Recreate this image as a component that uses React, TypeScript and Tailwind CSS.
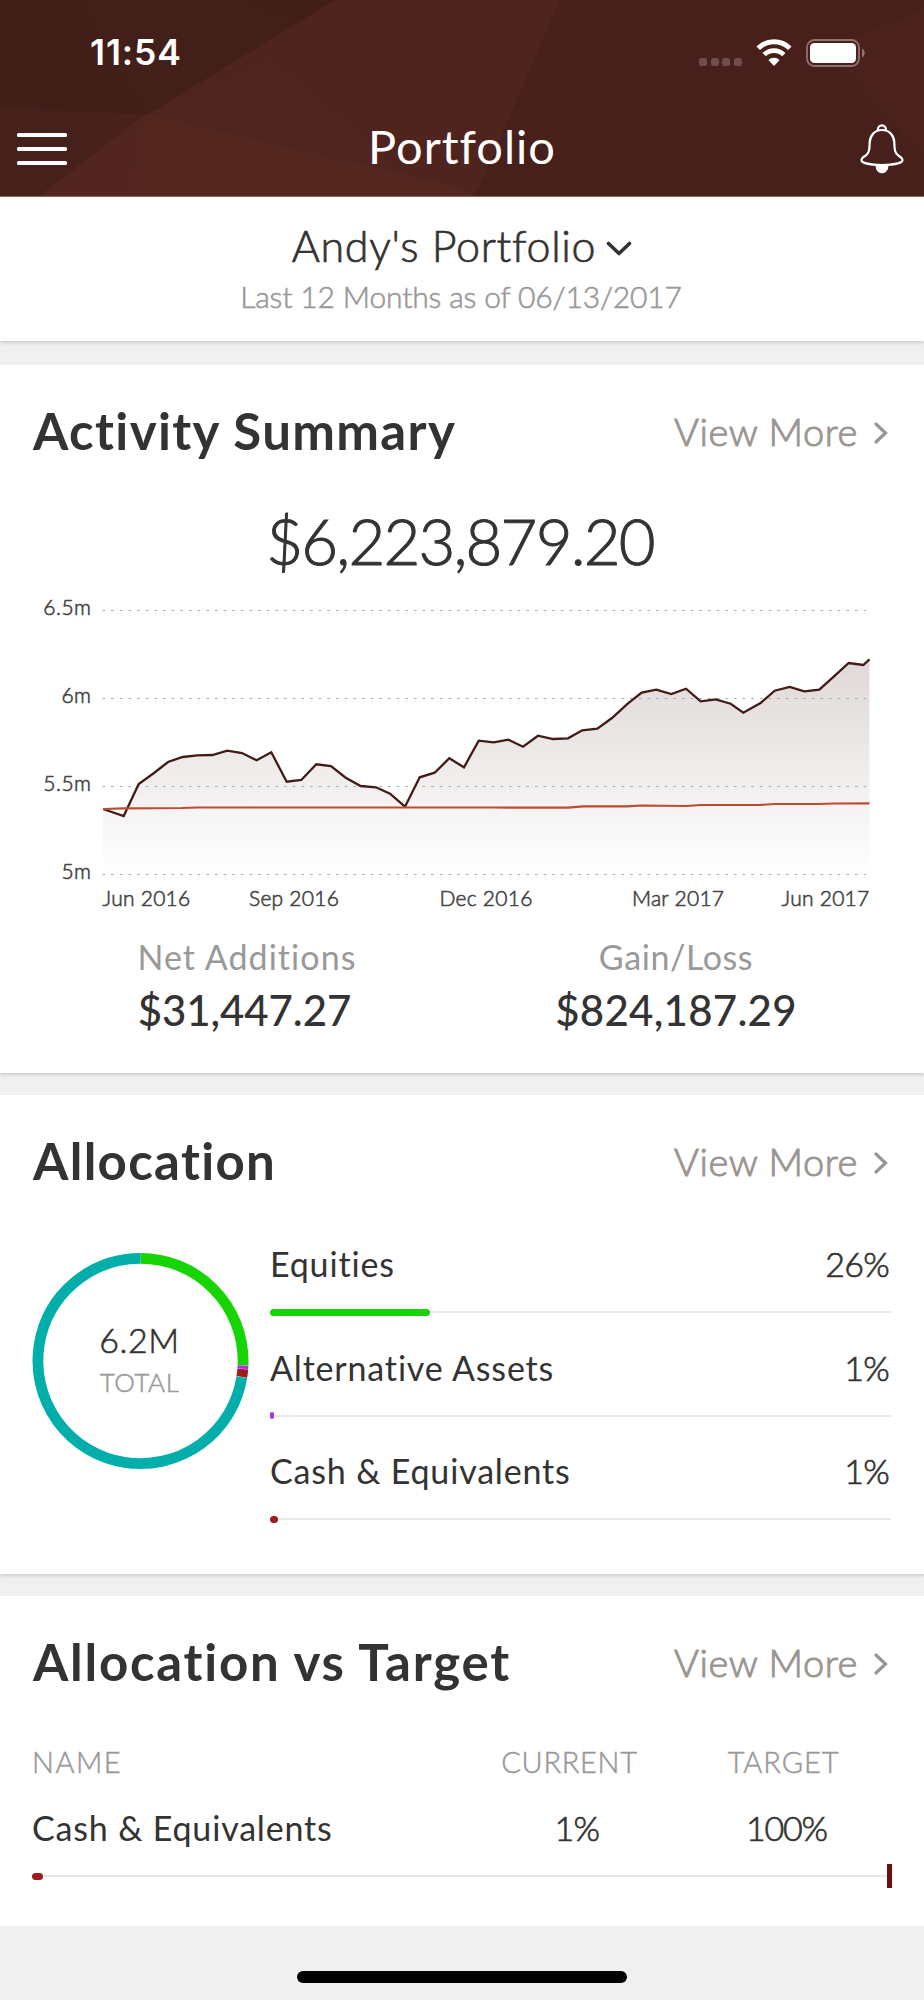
import type { ReactNode } from 'react'

const history: [number, number][] = [
    [103, 219], [123.7, 226], [138.7, 194], [154, 183], [168, 172], [182.7, 167],
    [197.3, 165.3], [212.3, 165], [227.3, 160.7], [242, 163], [256.7, 170.3],
    [271.3, 162.3], [286.7, 191.7], [301.3, 190], [316.3, 174.3], [331, 176],
    [345.7, 187.7], [360.7, 196], [376, 197.3], [390, 203.7], [405, 216.7],
    [419.7, 187.3], [434.7, 182.7], [449.3, 168.3], [464, 177.3], [478.7, 150.7],
    [493.7, 152.3], [508.3, 149.7], [523, 156.7], [538, 145.7], [553, 149],
    [568, 148.3], [582.3, 140.3], [597.3, 138.7], [612, 128], [627.7, 113.7],
    [641.7, 102.5], [656.3, 99.7], [671.3, 104], [686, 98.7], [700.7, 111.3],
    [715.7, 109.3], [730.7, 113.7], [743.3, 122.7], [761, 112.7], [774.7, 100.7],
    [789.7, 97], [804.3, 101.3], [819.3, 99.7], [834, 86.3], [848.7, 73],
    [863.3, 75], [869.5, 69.3],
]

const netInvested: [number, number][] = [
    [103, 219], [124, 218.3], [182, 218], [197, 217.5], [493, 217.5], [568, 217.7],
    [583, 216.3], [627, 216.3], [641, 215.5], [686, 216], [701, 215], [761, 214.8],
    [775, 214], [819, 214], [834, 213.5], [869.5, 213.3],
]

const yAxis = [
    { label: '6.5m', y: 20.5 },
    { label: '6m', y: 108.5 },
    { label: '5.5m', y: 196.5 },
    { label: '5m', y: 284.5 },
]

const xAxis = [
    { label: 'Jun 2016', x: 102.5 },
    { label: 'Sep 2016', x: 249 },
    { label: 'Dec 2016', x: 439.5 },
    { label: 'Mar 2017', x: 632 },
    { label: 'Jun 2017', x: 781.5 },
]

const allocations = [
    { name: 'Equities', percent: '26%', width: 160, color: '#17d505' },
    { name: 'Alternative Assets', percent: '1%', width: 4, color: '#b52fe8' },
    { name: 'Cash & Equivalents', percent: '1%', width: 8, color: '#a01c1c' },
]

// start and length in degrees, clockwise from the top
const slices = [
    { start: 0, length: 92.5, color: '#17d505' },
    { start: 92.5, length: 2, color: '#b52fe8' },
    { start: 94.5, length: 4.5, color: '#a01c1c' },
    { start: 99, length: 261, color: '#02aeaa' },
]

const toPoints = (points: [number, number][]) =>
    points.map((point) => point.join(',')).join(' ')

function HeaderFacets() {
    return (
        <svg
            className="absolute inset-0"
            width="924"
            height="197"
            viewBox="0 0 924 197"
        >
            <rect width="924" height="197" fill="#48201b" />
            <polygon points="560,0 924,0 924,12 855,38 690,36" fill="#47201a" />
            <polygon points="924,8 924,160 845,70 855,36" fill="#4a211c" />
            <polygon points="462,197 480,185 600,140 670,115 740,197" fill="#47201b" />
            <polygon points="0,0 335,0 148,114 0,108" fill="#421e19" />
            <polygon points="80,0 245,0 300,21 148,114 105,50" fill="#431f19" />
            <polygon points="0,108 148,114 38,197 0,197" fill="#46201a" />
            <polygon points="60,112 148,114 95,155" fill="#48211b" />
            <polygon points="335,0 560,0 478,190 462,197 38,197 148,114" fill="#50241e" />
            <polygon points="148,114 270,58 370,140 400,175" fill="#51251f" />
            <polygon points="148,114 462,188 478,197 38,197" fill="#542620" />
            <polygon points="146,114 126,197 38,197" fill="#522520" />
        </svg>
    )
}

function StatusIcons() {
    return (
        <div className="flex items-center">
            <div className="mt-[19px] flex gap-[3.6px]">
                {[0, 1, 2, 3].map((dot) => (
                    <div
                        key={dot}
                        className="size-2 rounded-[2.5px] bg-[#704e4a]"
                    />
                ))}
            </div>
            <svg
                className="ml-[14px]"
                width="36"
                height="27"
                viewBox="0 0 36 27"
                fill="none"
            >
                <path d="M2.2 9.3a22.6 22.6 0 0 1 31.6 0" stroke="#fff" strokeWidth="5" />
                <path d="M8.2 15.6a14 14 0 0 1 19.6 0" stroke="#fff" strokeWidth="4.8" />
                <path d="M18 27l-5.6-5.9a8 8 0 0 1 11.2 0z" fill="#fff" />
            </svg>
            <svg
                className="ml-[14px]"
                width="60"
                height="28"
                viewBox="0 0 60 28"
                fill="none"
            >
                <rect
                    x="1"
                    y="1"
                    width="52"
                    height="26"
                    rx="7.5"
                    stroke="#8e736f"
                    strokeWidth="1.8"
                />
                <rect x="4" y="4" width="46" height="20" rx="4.5" fill="#fff" />
                <path d="M56 9.5v9c3.600-1.6 3.600-7.4 0-9z" fill="#8e736f" />
            </svg>
        </div>
    )
}

function BellIcon() {
    return (
        <svg width="44" height="50" viewBox="0 0 44 50" fill="none">
            <path
                d="M17.8 6C17.6-.3 26.2-.3 26 6"
                stroke="#fff"
                strokeWidth="2.2"
            />
            <path
                d="M22 6C14.6 6 10 11.5 9.7 18.5 9.4 26 9.2 29.2 5.4 31.8 3 33.3 1.5 34.3 1.5 36c0 3 9 5 20.5 5s20.5-2 20.5-5c0-1.7-1.5-2.7-3.9-4.2-3.8-2.6-4-5.8-4.3-13.3C34 11.5 29.4 6 22 6z"
                stroke="#fff"
                strokeWidth="2.2"
            />
            <path d="M15.6 41.5h12.8c0 10.4-12.8 10.4-12.8 0z" fill="#fff" />
        </svg>
    )
}

function Header() {
    return (
        <header className="relative h-[197px] overflow-hidden border-b border-[#8b6a66]">
            <HeaderFacets />
            <div className="relative flex h-[105px] items-center justify-between pr-[58px] pl-[90px] text-white">
                <span className="pt-px font-[Inter] text-[35.5px] font-semibold tracking-[0.9px]">
                    11:54
                </span>
                <StatusIcons />
            </div>
            <div className="relative grid h-[88px] grid-cols-[1fr_auto_1fr] items-center pr-5 pl-[17px] text-white">
                <div className="flex flex-col gap-[10.4px]">
                    <div className="h-1 w-[50px] rounded-[1.5px] bg-white" />
                    <div className="h-1 w-[50px] rounded-[1.5px] bg-white" />
                    <div className="h-1 w-[50px] rounded-[1.5px] bg-white" />
                </div>
                <h1 className="pb-[6px] pl-[3px] text-[47px] leading-[60px] tracking-[1px]">
                    Portfolio
                </h1>
                <div className="flex justify-end">
                    <BellIcon />
                </div>
            </div>
        </header>
    )
}

function CardHeader({ title, spacing }: { title: string; spacing: string }) {
    return (
        <div className="flex h-[95px] items-center justify-between pt-[36px] pr-[36px] pl-[33px]">
            <h2 className={`text-[51px] leading-[60px] font-bold ${spacing}`}>
                {title}
            </h2>
            <div className="flex items-center text-[38px] leading-[60px] font-light tracking-[0.55px] text-[#9b9592] [-webkit-text-stroke:1px]">
                View More
                <svg
                    className="mt-[4px] ml-[16px]"
                    width="14"
                    height="22"
                    viewBox="0 0 14 22"
                    fill="none"
                >
                    <path
                        d="M2 2l9.5 9L2 20"
                        stroke="currentColor"
                        strokeWidth="3.2"
                        strokeLinecap="round"
                    />
                </svg>
            </div>
        </div>
    )
}

function Card({ className, children }: { className: string; children: ReactNode }) {
    return (
        <section
            className={`bg-white shadow-[0_2px_3px_rgba(0,0,0,0.14)] ${className}`}
        >
            {children}
        </section>
    )
}

function ActivityChart() {
    return (
        <svg
            className="mt-[9px] block"
            width="924"
            height="325"
            viewBox="0 0 924 325"
            fill="none"
        >
            <defs>
                <linearGradient
                    id="area"
                    gradientUnits="userSpaceOnUse"
                    x1="0"
                    y1="69"
                    x2="0"
                    y2="284"
                >
                    <stop offset="0" stopColor="#421a16" stopOpacity="0.17" />
                    <stop offset="1" stopColor="#421a16" stopOpacity="0" />
                </linearGradient>
            </defs>
            <polygon
                points={`103,284 ${toPoints(history)} 869.5,284`}
                fill="url(#area)"
            />
            {yAxis.map(({ label, y }) => (
                <g key={label}>
                    <line
                        x1="102.5"
                        x2="866"
                        y1={y}
                        y2={y}
                        stroke="#a9a9a9"
                        strokeDasharray="2.6 6.05"
                    />
                    <text
                        x="91.5"
                        y={y + 4.5}
                        textAnchor="end"
                        className="fill-[#444] stroke-[#444] stroke-[0.6] text-[21px] font-light tracking-[0.5px]"
                    >
                        {label}
                    </text>
                </g>
            ))}
            <polyline points={toPoints(history)} stroke="#421a16" strokeWidth="2.3" />
            <polyline points={toPoints(netInvested)} stroke="#bd4b2e" strokeWidth="2.2" />
            {xAxis.map(({ label, x }) => (
                <text
                    key={label}
                    x={x}
                    y="316"
                    className="fill-[#444] stroke-[#444] stroke-[0.6] text-[21px] font-light tracking-[0.25px]"
                >
                    {label}
                </text>
            ))}
        </svg>
    )
}

function ActivitySummary() {
    return (
        <Card className="mt-6 h-[708px]">
            <CardHeader title="Activity Summary" spacing="tracking-[1.35px]" />
            <p className="mt-[41px] pr-1 text-center text-[63.5px] leading-[80px] font-light tracking-[-1.8px] [-webkit-text-stroke:1px]">
                $6,223,879.20
            </p>
            <ActivityChart />
            <div className="mt-[20px] grid grid-cols-2 px-8 text-center">
                <div>
                    <p className="text-[34px] leading-[44px] tracking-[1.06px] text-[#999]">
                        Net Additions
                    </p>
                    <p className="mt-1 pr-[5px] text-[42px] leading-[54px] font-medium tracking-[-0.1px]">
                        $31,447.27
                    </p>
                </div>
                <div>
                    <p className="pr-[2px] text-[34px] leading-[44px] tracking-[0.58px] text-[#999]">
                        Gain/Loss
                    </p>
                    <p className="mt-1 pr-[2px] text-[42px] leading-[54px] font-medium tracking-[0.26px]">
                        $824,187.29
                    </p>
                </div>
            </div>
        </Card>
    )
}

function Donut() {
    return (
        <div className="relative mt-[11px] size-[217px]">
            <svg width="217" height="217" viewBox="0 0 217 217" fill="none">
                {slices.map(({ start, length, color }) => (
                    <circle
                        key={start}
                        cx="108.5"
                        cy="108"
                        r="102.6"
                        pathLength="360"
                        stroke={color}
                        strokeWidth="10.8"
                        strokeDasharray={`${length} ${360 - length}`}
                        transform={`rotate(${start - 90} 108.5 108)`}
                    />
                ))}
            </svg>
            <div className="absolute inset-0 pt-[65px] pr-[2px] text-center font-light">
                <p className="text-[34px] leading-[44px] tracking-[0.54px] [-webkit-text-stroke:0.6px]">
                    6.2M
                </p>
                <p className="text-[26px] leading-[40px] tracking-[0.56px] text-[#999] [-webkit-text-stroke:0.5px]">
                    TOTAL
                </p>
            </div>
        </div>
    )
}

function Allocation() {
    return (
        <Card className="mt-[22px] h-[479px]">
            <CardHeader title="Allocation" spacing="tracking-[1.3px]" />
            <div className="mt-[52px] flex pr-[33px] pl-8">
                <Donut />
                <div className="ml-[21px] grid flex-1 auto-rows-[103.7px]">
                    {allocations.map(({ name, percent, width, color }) => (
                        <div key={name}>
                            <div className="flex justify-between pr-[2px] text-[34px] leading-[44px]">
                                <span className="tracking-[0.83px]">{name}</span>
                                <span className="font-light tracking-[-0.7px] [-webkit-text-stroke:0.7px]">
                                    {percent}
                                </span>
                            </div>
                            <div className="relative flex h-[52px] items-center">
                                <div className="h-[2px] w-full bg-[#e8e8e9]" />
                                <div
                                    className="absolute h-[7px] rounded-full"
                                    style={{ width, backgroundColor: color }}
                                />
                            </div>
                        </div>
                    ))}
                </div>
            </div>
        </Card>
    )
}

function AllocationVsTarget() {
    return (
        <section className="mt-[22px] h-[330px] bg-white">
            <CardHeader title="Allocation vs Target" spacing="tracking-[1.75px]" />
            <div className="px-8">
                <div className="mt-[51px] grid grid-cols-[1fr_210px_210px] text-[29px] leading-[40px] font-light text-[#999] [-webkit-text-stroke:0.5px]">
                    <span className="tracking-[1.5px]">NAME</span>
                    <span className="pr-[15px] text-center tracking-[0.73px]">
                        CURRENT
                    </span>
                    <span className="pr-[7px] text-center tracking-[0.92px]">
                        TARGET
                    </span>
                </div>
                <div className="mt-[24px] grid grid-cols-[1fr_210px_210px] text-[34px] leading-[44px]">
                    <span className="tracking-[0.83px]">
                        Cash & Equivalents
                    </span>
                    <span className="text-center font-light tracking-[-0.7px] [-webkit-text-stroke:0.7px]">
                        1%
                    </span>
                    <span className="pr-px text-center font-light tracking-[-1.2px] [-webkit-text-stroke:0.7px]">
                        100%
                    </span>
                </div>
                <div className="relative flex h-[52px] items-center">
                    <div className="h-[2px] w-full bg-[#e8e8e9]" />
                    <div className="absolute left-0 h-[7px] w-[11px] rounded-full bg-[#a01c1c]" />
                    <div className="absolute right-0 h-6 w-[5px] bg-[#6f0f12]" />
                </div>
            </div>
        </section>
    )
}

export default function App() {
    return (
        <div className="h-[2000px] w-[924px] overflow-hidden bg-[#f0f0f0] font-[Lato,sans-serif] text-[#333]">
            <Header />
            <Card className="h-[144px] pt-[23px]">
                <div className="flex items-center justify-center text-[43px] leading-[52px] font-light tracking-[0.7px] [-webkit-text-stroke:0.7px]">
                    Andy's Portfolio
                    <svg
                        className="mt-[5px] ml-[10px]"
                        width="26"
                        height="16"
                        viewBox="0 0 26 16"
                        fill="none"
                    >
                        <path
                            d="M2.5 2.5L13 12.5l10.500-10"
                            stroke="#333"
                            strokeWidth="3.6"
                            strokeLinecap="round"
                            strokeLinejoin="round"
                        />
                    </svg>
                </div>
                <p className="mt-[4px] pr-[2px] text-center text-[30px] leading-[40px] font-light tracking-[-0.15px] text-[#999] [-webkit-text-stroke:0.6px]">
                    Last 12 Months as of 06/13/2017
                </p>
            </Card>
            <ActivitySummary />
            <Allocation />
            <AllocationVsTarget />
            <div className="mx-auto mt-[45px] h-[12px] w-[330px] rounded-full bg-black" />
        </div>
    )
}
